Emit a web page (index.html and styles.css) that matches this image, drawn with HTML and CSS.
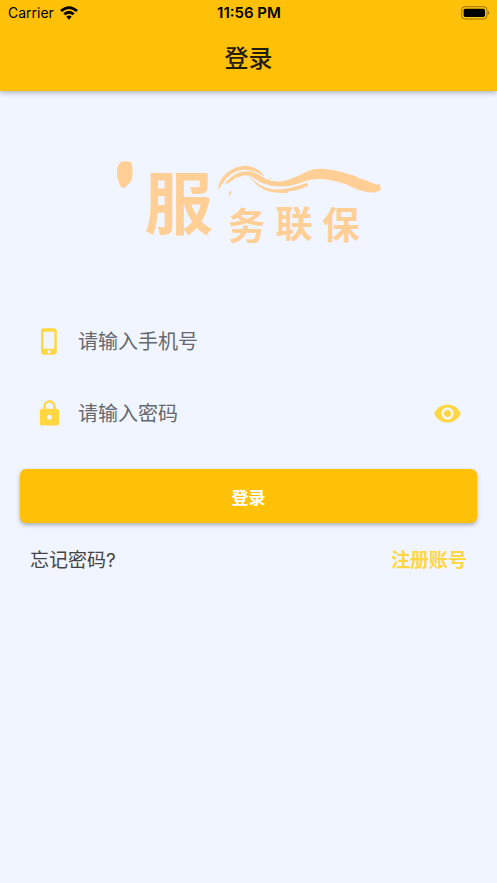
FILE: index.html
```html
<!DOCTYPE html>
<html lang="zh-CN">
<head>
    <meta charset="UTF-8">
    <meta name="viewport" content="width=device-width, initial-scale=1.0">
    <title>登录</title>
    <link rel="stylesheet" href="styles.css">
</head>
<body>
    <header class="app-bar">
        <div class="status-bar">
            <div class="carrier">
                <span>Carrier</span>
                <svg class="wifi" viewBox="0 0 54 42" aria-hidden="true">
                    <path d="M0 12 Q27 -11 54 12 L48 18 Q27 0 6 18 Z"/>
                    <path d="M10 22 Q27 7 44 22 L38 28 Q27 18 16 28 Z"/>
                    <path d="M19 32 Q27 25 35 32 L27 41 Z"/>
                </svg>
            </div>
            <span class="time">11:56 PM</span>
            <div class="battery">
                <svg viewBox="0 0 87 42" aria-hidden="true">
                    <rect x="2" y="2" width="76" height="37" rx="10" fill="none" stroke="#000" stroke-opacity="0.4" stroke-width="3"/>
                    <rect x="8" y="8" width="64" height="25" rx="5"/>
                    <path d="M82 14 Q88 20 82 27 Z" fill-opacity="0.5"/>
                </svg>
            </div>
        </div>
        <h1 class="title">登录</h1>
    </header>

    <main class="content">
        <svg class="logo" viewBox="0 0 861 315" role="img" aria-label="服务联保">
            <!-- seal -->
            <path d="M48 36 Q65 31 80 38 Q84 52 82 72 Q82 90 74 98 Q68 108 56 114 Q46 112 42 98 Q35 84 36 66 Q36 44 48 36 Z"/>
            <!-- brush stroke -->
            <path d="M338 116 C342 80 370 58 402 49 C428 43 456 52 474 74 L475 79 C452 64 430 56 408 60 C374 66 358 88 342 116 Z"/>
            <path d="M357 104 C378 72 408 60 434 64 C462 70 472 86 500 93 C550 100 578 72 620 58 C664 51 712 67 754 80 L756 84 C774 86 792 98 814 103 L822 102 L825 120 L814 123 L811 127 L789 126 C762 122 742 114 723 103 C691 92 648 82 614 89 C588 96 560 109 530 109 C494 109 470 102 448 86 C420 66 390 76 357 104 Z"/>
            <path d="M425 78 C451 91 462 113 504 118 C544 120 570 108 606 99 L608 106 C588 117 565 124 546 123 L545 129 C518 129 490 128 466 113 C447 101 441 87 425 78 Z"/>
            <path d="M360 98 C376 80 396 72 416 76 C396 80 380 88 366 101 Z"/>
            <path d="M490 86 L494 81 L497 89 Z"/>
            <path d="M371 129 Q373 121 378 120 Q378 132 373 139 Q370 136 371 129 Z"/>
            <text class="logo-big" x="118" y="236">服</text>
            <text class="logo-small" x="368" y="270">务</text>
            <text class="logo-small" x="510" y="262">联</text>
            <text class="logo-small" x="650" y="265">保</text>
        </svg>

        <form class="login-form">
            <div class="field">
                <label for="phone" aria-label="手机号">
                    <svg class="icon" viewBox="0 0 24 24" aria-hidden="true">
                        <path d="M15.5 1h-8A2.5 2.5 0 0 0 5 3.5v17A2.5 2.5 0 0 0 7.5 23h8a2.5 2.5 0 0 0 2.5-2.5v-17A2.5 2.5 0 0 0 15.5 1zm-4 21c-.83 0-1.5-.67-1.5-1.5s.67-1.5 1.5-1.5 1.5.67 1.5 1.5-.67 1.5-1.5 1.5zm4.5-4H7V4h9v14z"/>
                    </svg>
                </label>
                <input id="phone" type="tel" placeholder="请输入手机号">
            </div>
            <div class="field">
                <label for="password" aria-label="密码">
                    <svg class="icon" viewBox="0 0 24 24" aria-hidden="true">
                        <path d="M18 8h-1V6c0-2.76-2.24-5-5-5S7 3.24 7 6v2H6c-1.1 0-2 .9-2 2v10c0 1.1.9 2 2 2h12c1.1 0 2-.9 2-2V10c0-1.1-.9-2-2-2zm-6 9c-1.1 0-2-.9-2-2s.9-2 2-2 2 .9 2 2-.9 2-2 2zm3.1-9H8.9V6c0-1.71 1.39-3.1 3.1-3.1s3.1 1.39 3.1 3.1v2z"/>
                    </svg>
                </label>
                <input id="password" type="password" placeholder="请输入密码">
                <button class="toggle" type="button" aria-label="显示密码">
                    <svg class="icon" viewBox="0 0 24 24" aria-hidden="true">
                        <path d="M12 4.5C7 4.5 2.73 7.61 1 12c1.73 4.39 6 7.5 11 7.5s9.27-3.11 11-7.5c-1.73-4.39-6-7.5-11-7.5zM12 17c-2.76 0-5-2.24-5-5s2.24-5 5-5 5 2.24 5 5-2.24 5-5 5zm0-8c-1.66 0-3 1.34-3 3s1.34 3 3 3 3-1.34 3-3-1.34-3-3-3z"/>
                    </svg>
                </button>
            </div>
            <button class="submit" type="submit">登录</button>
        </form>

        <nav class="links">
            <a class="forgot" href="#">忘记密码?</a>
            <a class="register" href="#">注册账号</a>
        </nav>
    </main>

    <script>
        var password = document.getElementById('password');
        document.querySelector('.toggle').addEventListener('click', function() {
            password.type = password.type === 'password' ? 'text' : 'password';
        });
    </script>
</body>
</html>
```

FILE: styles.css
```css
* {
    box-sizing: border-box;
}
body {
    margin: 0;
    min-height: 100vh;
    background-color: #f0f5ff;
    font-family: Inter, "Noto Sans CJK SC", sans-serif;
}
button, input {
    font-family: inherit;
    border: none;
    padding: 0;
    background: none;
}
.app-bar {
    background-color: #ffc107;
    box-shadow: 0 2px 5px rgba(0, 0, 0, 0.25);
}
.status-bar {
    display: grid;
    grid-template-columns: 1fr auto 1fr;
    align-items: center;
    height: 25px;
    padding: 0 7px 0 8px;
    font-size: 14px;
    color: #000;
}
.carrier {
    display: flex;
    align-items: center;
    gap: 6px;
}
.wifi {
    width: 18px;
    height: 14px;
}
.time {
    font-size: 15px;
    font-weight: 600;
}
.battery {
    display: flex;
    justify-content: flex-end;
}
.battery svg {
    width: 29px;
    height: 14px;
}
.title {
    margin: 0;
    height: 66px;
    line-height: 68px;
    text-align: center;
    font-size: 24px;
    font-weight: 500;
    color: #231d0b;
}
.content {
    padding: 59px 20px 0;
}
.logo {
    display: block;
    width: 63%;
    margin: 0 auto 50px;
    fill: #ffcf96;
}
.logo text {
    font-family: "Noto Sans CJK SC", sans-serif;
    font-weight: 700;
}
.logo-big {
    font-size: 204px;
}
.logo-small {
    font-size: 112px;
}
.field {
    display: flex;
    align-items: center;
    gap: 14px;
    height: 72px;
    padding: 0 15px;
}
.field input {
    flex: 1;
    min-width: 0;
    height: 48px;
    padding-top: 2px;
    font-size: 20px;
    color: #222;
    outline: none;
}
.field input::placeholder {
    color: #66686c;
}
.icon {
    display: block;
    width: 29px;
    height: 29px;
    fill: #ffd740;
}
.toggle {
    cursor: pointer;
}
.submit {
    display: block;
    width: 100%;
    height: 54px;
    margin-top: 20px;
    border-radius: 6px;
    background-color: #ffc107;
    box-shadow: 0 2px 4px rgba(0, 0, 0, 0.3);
    font-size: 17px;
    font-weight: 700;
    color: #fff;
    cursor: pointer;
}
.links {
    display: flex;
    justify-content: space-between;
    padding: 24px 10px;
    font-size: 19px;
    line-height: 28px;
}
.links a {
    text-decoration: none;
}
.forgot {
    color: #444;
}
.register {
    color: #ffd740;
    font-weight: 700;
}
```
